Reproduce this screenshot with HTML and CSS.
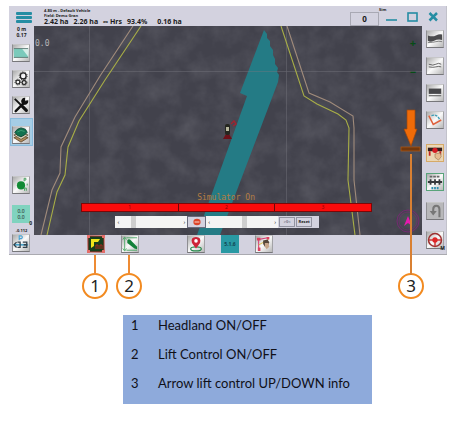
FILE: index.html
```html
<!DOCTYPE html>
<html lang="en">
<head>
<meta charset="utf-8">
<title>Headland and lift control</title>
<link rel="stylesheet" href="styles.css">
</head>
<body>
<main class="page">
  <section class="app">
    <header class="topbar">
      <button class="menu" aria-label="Menu">
        <svg viewBox="0 0 16 11"><g fill="#258da3"><rect width="16" height="3" rx="1"/><rect y="4" width="16" height="3" rx="1"/><rect y="8" width="16" height="3" rx="1"/></g></svg>
      </button>
      <div class="status">
        <div class="status-small">4.80 m - Default Vehicle</div>
        <div class="status-small">Field: Demo Gran</div>
        <div class="totals"><span>2.42 ha</span><span>2.26 ha</span><span>∞ Hrs</span><span>93.4%</span><span class="remaining">0.16 ha</span></div>
      </div>
      <button class="counter">0</button>
      <span class="sim">Sim</span>
      <div class="window-buttons">
        <button aria-label="Minimise"><svg viewBox="0 0 12 12"><path d="M1 9H12" stroke="#258da3" stroke-width="1.6"/></svg></button>
        <button aria-label="Maximise"><svg viewBox="0 0 12 12"><rect x="2" y="2" width="9" height="8" fill="none" stroke="#258da3" stroke-width="1.6"/></svg></button>
        <button aria-label="Close"><svg viewBox="0 0 12 12"><path d="M2.5 2L10 9.500M10 2L2.500 9.500" stroke="#258da3" stroke-width="2.500"/></svg></button>
      </div>
    </header>

    <nav class="side left">
      <div class="group">
        <div class="readout">0 m<br>0.17</div>
        <button class="tool" aria-label="Field"><svg viewBox="0 0 18 18"><rect x="1" y="4" width="16" height="10" fill="#7bcabb"/><path d="M10 4H17V13Z" fill="#d7eee8"/><path d="M1 4H17M1 14H17" stroke="#5f7b75"/></svg></button>
        <button class="tool" aria-label="Settings"><svg viewBox="0 0 18 18" fill="none" stroke="#222"><circle cx="11.500" cy="5.500" r="3.300" stroke-width="1.500"/><circle cx="11.500" cy="5.500" r="4.500" stroke-dasharray="1.200 1.600"/><circle cx="5.500" cy="12.500" r="2.200" stroke-width="1.300"/><circle cx="5.500" cy="12.500" r="3.300" stroke-dasharray="1 1.300"/><circle cx="12.500" cy="13" r="2.200" stroke-width="1.300"/><circle cx="12.500" cy="13" r="3.200" stroke-dasharray="1 1.300"/></svg></button>
        <button class="tool" aria-label="Tools"><svg viewBox="0 0 18 18" fill="none" stroke="#111"><path d="M3 16L12 7" stroke-width="2.800" stroke-linecap="round"/><path d="M16.500 4.500A3.300 3.300 0 1 1 13 1.500L12.700 4.800Z" stroke-width="1.400" fill="#111"/><path d="M2 2L9 9" stroke-width="2"/><path d="M10.500 10.500L15 15" stroke-width="3.600" stroke-linecap="round"/></svg></button>
        <div class="selected">
          <button class="tool" aria-label="Field layers"><svg viewBox="0 0 18 18"><path d="M1 12L9 17L17 12L9 9Z" fill="#b08a5a" stroke="#614a2f"/><path d="M1 9L9 14L17 9L9 6Z" fill="#d4ceb8" stroke="#665a3e"/><path d="M2 6L5 2.500L9 1L14 2.500L16 6L13 9L9 11L5 9.500Z" fill="#127250" stroke="#0c4634"/><path d="M5 5.500Q9 2.500 13 5" fill="none" stroke="#41a276"/></svg></button>
        </div>
      </div>
      <div class="group">
        <button class="tool" aria-label="Sections"><svg viewBox="0 0 18 18"><circle cx="9" cy="9.500" r="4.600" fill="#128a35"/><path d="M12.500 5V1.500H14.500V3.500H12.500M16 7.500V9.500M13 15.500V12.500H15V15.500" stroke="#3f9c58" fill="none"/></svg></button>
        <button class="tool values"><span>0.0</span><span>0.0</span><b>0</b></button>
        <div class="offset">-0.112</div>
        <button class="tool" aria-label="Auto steer configuration"><svg viewBox="0 0 18 18" fill="none"><path d="M7 6V1H9.500Q11.500 2.500 9.500 4H7" stroke="#4aa4d4" stroke-width="1.300"/><path d="M1 11H17" stroke="#49a4cb" stroke-width="2"/><path d="M4 8L1 11L4 14M5 8H8V14H5M11 8H15.500V14H11M12 11H15" stroke="#34434c" stroke-width="1.500"/></svg></button>
      </div>
    </nav>

    <div class="map">
      <svg class="terrain" viewBox="34 26 388 209" preserveAspectRatio="xMidYMid slice" role="img" aria-label="Field map">
        <defs>
          <filter id="soil" x="0" y="0" width="100%" height="100%">
            <feTurbulence type="fractalNoise" baseFrequency=".05" numOctaves="4" seed="8"/>
            <feColorMatrix values="0 0 0 0 .5  0 0 0 0 .5  0 0 0 0 .54  .9 0 0 0 -.3"/>
          </filter>
        </defs>
        <rect x="34" y="26" width="388" height="209" fill="#42424c"/>
        <rect x="34" y="26" width="388" height="209" filter="url(#soil)" opacity=".28"/>
        <path d="M264 30L267 34L267 38L270 41L270 46L273 50L273 55L275 59L275 64L278 68L277 72L279 75L278 82L220 235H197L247 96L240 93Z" fill="#247b85"/>
        <path d="M89.500 26V235M286.500 26V235M34 71.500H422" stroke="#777780" stroke-width=".6" opacity=".7"/>
        <g fill="none" stroke-width="1.100">
          <path d="M133 26L100 76L75 117L61 147L60 173L52 190L41 235M287 26L309 93L330 102L353 116L354 128V180L360 235" stroke="#a08b7b"/>
          <path d="M141 26L105 80L79 121L68 147L65 175L57 192L47 235M281 26L304 96L317 104L338 114L346 120L349 128L348 180L355 235" stroke="#a8ae46"/>
        </g>
        <path d="M231 124L234 121L236 124L233 126" fill="none" stroke="#9c2632" stroke-width="1.500"/>
        <path d="M223 139L226 134H229L232 139Z" fill="#6d1019"/>
        <rect x="225" y="124" width="5" height="11" rx="2" fill="#25261f"/><rect x="226" y="127" width="3" height="4" fill="#b6b69c"/>
        <g fill="none" stroke="#84217d"><circle cx="408" cy="221" r="11" opacity=".75"/><circle cx="408" cy="221" r="9" opacity=".5"/></g>
        <path d="M408 216L412 226L408 223L404 226Z" fill="#e619af"/>
        <path d="M407 110H415V129H417L411 146L404 129H407Z" fill="#f06b08" stroke="#a44708" stroke-width=".7"/>
        <rect x="401" y="147" width="19" height="4" fill="#70380e" stroke="#b45912" stroke-width=".7"/>
      </svg>
      <div class="heading">0.0</div>
      <div class="zoom"><button aria-label="Zoom in">+</button><button aria-label="Zoom out">−</button></div>
      <div class="simulator">
        <div class="sim-title">Simulator On</div>
        <div class="sections"><button>1</button><button>2</button><button>3</button></div>
        <div class="sim-controls">
          <label class="scroll">‹<input type="range" min="0" max="100" value="20" aria-label="Speed">›</label>
          <button class="stop" aria-label="Stop"><svg viewBox="0 0 10 10"><ellipse cx="5" cy="5" rx="4.500" ry="4" fill="#dc4328"/><path d="M2 5H8" stroke="#f5bfb0" stroke-width="1.500"/></svg></button>
          <label class="scroll">‹<input type="range" min="0" max="100" value="54" aria-label="Steering">›</label>
          <button class="mini muted">&gt;0&lt;</button><button class="mini">Reset</button>
        </div>
      </div>
    </div>

    <nav class="side right">
      <div class="group">
        <button class="tool" aria-label="Curve track"><svg viewBox="0 0 18 18"><path d="M1 5Q6 7 10 5T17 4V10Q12 9 8 11T1 11Z" fill="#4c4c4e"/><path d="M1 13Q7 13 10 12T17 12" stroke="#777" fill="none"/></svg></button>
        <button class="tool" aria-label="Contour track"><svg viewBox="0 0 18 18" fill="none" stroke="#555"><path d="M2 7Q7 9 10 7T16 7M2 10Q7 11 10 10T16 10"/></svg></button>
        <button class="tool" aria-label="Straight track"><svg viewBox="0 0 18 18"><path d="M2 4H16V10H2Z" fill="#48484b"/><path d="M2 12H16" stroke="#777" stroke-width="1.500"/></svg></button>
        <button class="tool" aria-label="Angle"><svg viewBox="0 0 18 18" fill="none"><path d="M2 4L7 14L16 9" stroke="#df623e" stroke-width="1.700"/><path d="M5 4Q11 2 14 8" stroke="#3b9cb5" stroke-width="1.500" stroke-dasharray="3 1"/></svg></button>
      </div>
      <div class="group lower">
        <button class="tool manual" aria-label="Manual sections"><svg viewBox="0 0 18 18"><path d="M1 3H17V7H1Z" fill="#321e1e"/><circle cx="9" cy="6" r="3" fill="#d51c23"/><path d="M3 7V12M15 7V11" stroke="#c02424" stroke-width="2"/><path d="M9 10L15 9L16 13L13 17L9 14Z" fill="#e5bd91" stroke="#8e6745" stroke-width=".6"/></svg></button>
        <button class="tool auto" aria-label="Automatic sections"><svg viewBox="0 0 18 18" fill="none"><path d="M3 3H15" stroke="#666" stroke-width="2" stroke-dasharray="3 1"/><path d="M1 9H17M4 6V12M9 6V12M14 6V12" stroke="#36383c" stroke-width="2"/><path d="M5 16H13" stroke="#308fb0" stroke-width="2.500" stroke-dasharray="2 1"/></svg></button>
        <button class="tool uturn" aria-label="U-turn"><svg viewBox="0 0 18 18" fill="none" stroke="#777"><path d="M14 16V7Q14 3 10.500 3T7 7V11" stroke-width="2.300"/><path d="M3 9L7 14L11 9Z" fill="#777" stroke="none"/></svg></button>
        <button class="tool" aria-label="Auto steer"><svg viewBox="0 0 18 18" fill="none"><circle cx="9" cy="9" r="7.300" stroke="#9c3030" stroke-width="1.700"/><path d="M2 9H16M9 9V16" stroke="#cf3b3b" stroke-width="1.700"/><circle cx="9" cy="9" r="3" fill="#df2727"/></svg><b>M</b></button>
      </div>
    </nav>

    <footer class="bottombar">
      <div class="row">
        <button class="tool headland" aria-label="Headland"><svg viewBox="0 0 18 18"><rect x="1" y="1" width="16" height="16" fill="#173f1d" stroke="#b33432"/><path d="M4 13V4H13L11 7H7V11Z" fill="#efe51b"/><path d="M9 14V10H11V14M13 14V10H15V14" fill="none" stroke="#a92920"/><path d="M0 0H3V3H0ZM15 0H18V3H15ZM0 15H3V18H0ZM15 15H18V18H15Z" fill="#e36d68"/></svg></button>
        <button class="tool" aria-label="Lift control"><svg viewBox="0 0 18 18"><path d="M3 2V16M1 4L3 1L5 4M1 14L3 17L5 14M5 2H17M5 16H17" stroke="#49a663" fill="none"/><path d="M6 5Q7 3 9 4L17 12V15L14 14L6 8Z" fill="#14813a"/></svg></button>
      </div>
      <div class="row">
        <button class="tool" aria-label="Location"><svg viewBox="0 0 18 18"><ellipse cx="9" cy="14.500" rx="6" ry="2.200" fill="none" stroke="#23884b" stroke-width="1.300"/><path d="M9 14L4.500 8Q2.500 1 9 1T13.500 8Z" fill="#ce2438"/><circle cx="9" cy="5.500" r="2" fill="#fff"/></svg></button>
        <button class="tool version">5.1.6</button>
        <button class="tool" aria-label="Flag by hand"><svg viewBox="0 0 18 18"><path d="M3 15V4L13 2" fill="none" stroke="#d33d76" stroke-width="1.200"/><path d="M3 10L14 4" stroke="#d7b837"/><path d="M1 2H5V5H1ZM12 1H15V4H12ZM2 13H5V17H2Z" fill="#db4260"/><path d="M8 5L13 4L15 7L13 12H10L8 9Z" fill="#544539"/><path d="M10 8L14 8L15 12L12 15L10 12Z" fill="#c6a58b"/></svg></button>
      </div>
    </footer>
  </section>

  <div class="callouts">
    <div class="row">
      <span class="callout">1</span>
      <span class="callout">2</span>
    </div>
    <span class="callout tall">3</span>
  </div>

  <div class="legend">
    <table>
      <tr><th scope="row">1</th><td>Headland ON/OFF</td></tr>
      <tr><th scope="row">2</th><td>Lift Control ON/OFF</td></tr>
      <tr><th scope="row">3</th><td>Arrow lift control UP/DOWN info</td></tr>
    </table>
  </div>
</main>
</body>
</html>
```
FILE: styles.css
```css
* { box-sizing: border-box; }
body { margin: 0; background: #fff; color: #1b1b20; font-family: "Noto Sans", sans-serif; }
button { margin: 0; padding: 0; border: 0; background: none; color: inherit; font: inherit; }
svg { display: block; }
.page { padding: 6px 13px 20px 9px; }

.app {
  display: grid;
  grid-template: 20px auto 20px / 25px minmax(0, 1fr) 25px;
  grid-template-areas: "top top top" "left map right" "left bottom right";
  background: #d3d2df;
  box-shadow: inset 0 -1px #aaaab0, inset -1px 0 #c2c2cb;
}

.topbar { grid-area: top; display: flex; align-items: flex-start; padding: 0 8px 0 7px; }
.menu { width: 16px; margin-top: 6px; }
.status { flex: 1; margin: 2px 0 0 12px; font-weight: 700; white-space: nowrap; }
.status-small { font-size: 4px; line-height: 5px; }
.totals { display: flex; gap: 5px; font-size: 7px; line-height: 8px; }
.remaining { margin-left: 5px; }
.counter { width: 29px; height: 14px; margin-top: 6px; border: 1px solid #a9a9b4; font-size: 8px; line-height: 12px; font-weight: 700; }
.sim { width: 6px; margin-top: 1px; font-size: 4px; line-height: 5px; font-weight: 700; }
.window-buttons { display: flex; gap: 9px; margin-top: 5px; }
.window-buttons button { width: 12px; }

.side { display: flex; flex-direction: column; justify-content: space-between; padding: 0 3px; }
.left { grid-area: left; padding-bottom: 3px; }
.right { grid-area: right; padding: 4px 4px 6px; }
.group { display: flex; flex-direction: column; }
.left .group:first-child { gap: 8px; }
.right .group { gap: 9px; }
.right .lower { gap: 11px; }
.readout { height: 10px; font-size: 5px; line-height: 6px; font-weight: 700; text-align: center; }
.tool {
  position: relative;
  display: block;
  width: 18px;
  height: 18px;
  border: 1px solid;
  border-color: #c6c6c8 #a2a2a6 #77777b #8e8e92;
  background: linear-gradient(135deg, #aaa, #fafafa 50%, #b8b8b8);
}
.selected { margin: -4px -2px 0; padding: 8px 2px 2px; background: #a5cde6; box-shadow: inset 0 0 0 1px #8abbdc; }
.values { display: grid; align-content: center; margin-top: 11px; border: 0; background: #80d3bf; font-size: 5px; line-height: 6px; }
.tool b { position: absolute; right: -2px; bottom: -3px; font-size: 5px; line-height: 6px; }
.offset { height: 11px; padding-top: 5px; font-size: 4px; line-height: 5px; font-weight: 700; text-align: center; }
.manual { border-color: #d6aa68; background: #ead6b4; }
.auto { border-color: #59a47a; }
.uturn { background: #b8b8ba; }

.map { grid-area: map; position: relative; aspect-ratio: 388 / 209; overflow: hidden; }
.terrain { width: 100%; height: 100%; }
.heading { position: absolute; top: 13px; left: 1px; color: #b5b5b8; font: 8px/10px "DejaVu Sans Mono", monospace; }
.zoom { position: absolute; top: 11px; right: 4px; display: grid; gap: 18px; color: #064c16; font-size: 11px; line-height: 11px; font-weight: 700; }
.zoom button { width: 10px; height: 11px; }
.simulator { position: absolute; right: 13%; bottom: 7px; left: 12%; }
.sim-title { color: #b57d42; font: 8px/10px "DejaVu Sans Mono", monospace; text-align: center; }
.sections { display: grid; grid-template-columns: repeat(3, 1fr); border: 1px solid #7c0707; }
.sections button { height: 7px; background: #fa0b0b; color: #8c0303; font-size: 5px; line-height: 7px; }
.sections button + button { border-left: 1px solid #6c0707; }
.sim-controls { display: flex; align-items: stretch; width: 70%; height: 12px; margin: 4px 0 0 12%; background: #d3d2df; }
.scroll { flex: 1; display: flex; align-items: center; min-width: 0; padding: 0 2px; background: #f4f4f4; font-size: 6px; line-height: 12px; }
.scroll input { flex: 1; width: 0; min-width: 0; height: 12px; margin: 0; appearance: none; background: none; }
.scroll input::-webkit-slider-thumb { appearance: none; width: 5px; height: 12px; background: #cecece; }
.stop { display: grid; place-items: center; width: 19px; border: 1px solid #696b7c; }
.stop svg { width: 8px; }
.mini { width: 16px; margin: 1px 0 1px 1px; border: 1px solid #9293a1; font-size: 4px; line-height: 8px; font-weight: 700; }
.mini:last-child { margin-right: 7px; }
.muted { color: #77788a; }

.bottombar { grid-area: bottom; display: flex; gap: 48px; padding-left: 53px; }
.row { display: flex; gap: 16px; }
.headland { border: 0; }
.version { border: 0; background: #2999a3; color: #124653; font-size: 5px; font-weight: 700; }

.callouts { display: flex; justify-content: space-between; padding: 18px 23px 0 73px; }
.callouts .row { gap: 8px; }
.callout { position: relative; width: 26px; height: 26px; border: 2px solid #f28a20; border-radius: 50%; background: #fff; color: #222; font: 17px/22px "Noto Sans", sans-serif; text-align: center; }
.callout::before { content: ""; position: absolute; bottom: 100%; left: 10px; width: 2px; height: 20px; background: #ee8b34; }
.callout.tall::before { height: 121px; background: #d98032; }

.legend { margin: 16px 75px 0 114px; padding-bottom: 2px; background: #8eaadb; color: #101018; font: 13px/20px Lato, sans-serif; white-space: nowrap; }
.legend table { border-collapse: collapse; }
.legend tr { height: 29px; }
.legend th, .legend td { padding: 0; text-align: left; font-weight: 400; vertical-align: top; }
.legend th { width: 35px; padding-left: 8px; }
```
